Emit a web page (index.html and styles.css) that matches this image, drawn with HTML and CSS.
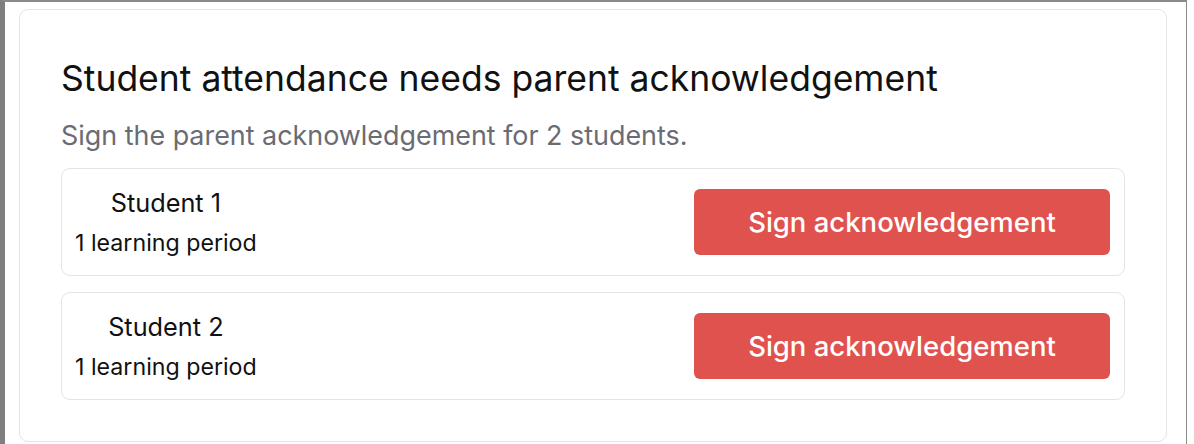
FILE: index.html
```html
<!DOCTYPE html>
<html lang="en">
<head>
<meta charset="utf-8">
<title>Attendance acknowledgement</title>
<link rel="stylesheet" href="styles.css">
</head>
<body>
<div class="frame">
  <section class="card">
    <h1 class="title">Student attendance needs parent acknowledgement</h1>
    <p class="subtitle">Sign the parent acknowledgement for 2 students.</p>
    <div class="rows">
      <div class="row">
        <div class="info">
          <span class="name">Student 1</span>
          <span class="period">1 learning period</span>
        </div>
        <button class="sign">Sign acknowledgement</button>
      </div>
      <div class="row">
        <div class="info">
          <span class="name">Student 2</span>
          <span class="period">1 learning period</span>
        </div>
        <button class="sign">Sign acknowledgement</button>
      </div>
    </div>
  </section>
</div>
</body>
</html>
```
FILE: styles.css
```css
html, body {
  margin: 0;
  padding: 0;
  background: #ffffff;
}
body {
  font-family: Inter, "Noto Sans", sans-serif;
  color: #111111;
}
.frame {
  box-sizing: border-box;
  width: 1187px;
  height: 444px;
  border-left: 5px solid #7f7f7f;
  border-top: 2px solid #8a8a8a;
  border-right: 1px solid #8a8a8a;
  padding: 7px 0 0 14px;
}
.card {
  box-sizing: border-box;
  width: 1148px;
  height: 433px;
  border: 1px solid #e4e4e4;
  border-radius: 9px;
  padding: 49px 41px 40px 41px;
}
.title {
  margin: 0;
  font-size: 35.5px;
  font-weight: 400;
  line-height: 40px;
  color: #111111;
}
.subtitle {
  margin: 20px 0 0 0;
  font-size: 26.9px;
  line-height: 32px;
  color: #6b6b74;
  font-weight: 400;
}
.rows {
  margin-top: 17px;
  display: flex;
  flex-direction: column;
  gap: 16px;
}
.row {
  box-sizing: border-box;
  height: 108px;
  border: 1px solid #e4e4e4;
  border-radius: 9px;
  padding: 0 14px 0 13px;
  display: flex;
  align-items: center;
  justify-content: space-between;
}
.info {
  display: flex;
  flex-direction: column;
  align-items: center;
  gap: 11px;
}
.name {
  font-size: 25.3px;
  line-height: 30px;
  color: #111111;
}
.period {
  align-self: flex-start;
  font-size: 23.2px;
  line-height: 28px;
  color: #111111;
}
.sign {
  width: 416px;
  height: 66px;
  border: none;
  border-radius: 6px;
  background: #df524e;
  color: #ffffff;
  font-family: Inter, "Noto Sans", sans-serif;
  font-size: 27.5px;
  font-weight: 500;
  cursor: pointer;
}
```
